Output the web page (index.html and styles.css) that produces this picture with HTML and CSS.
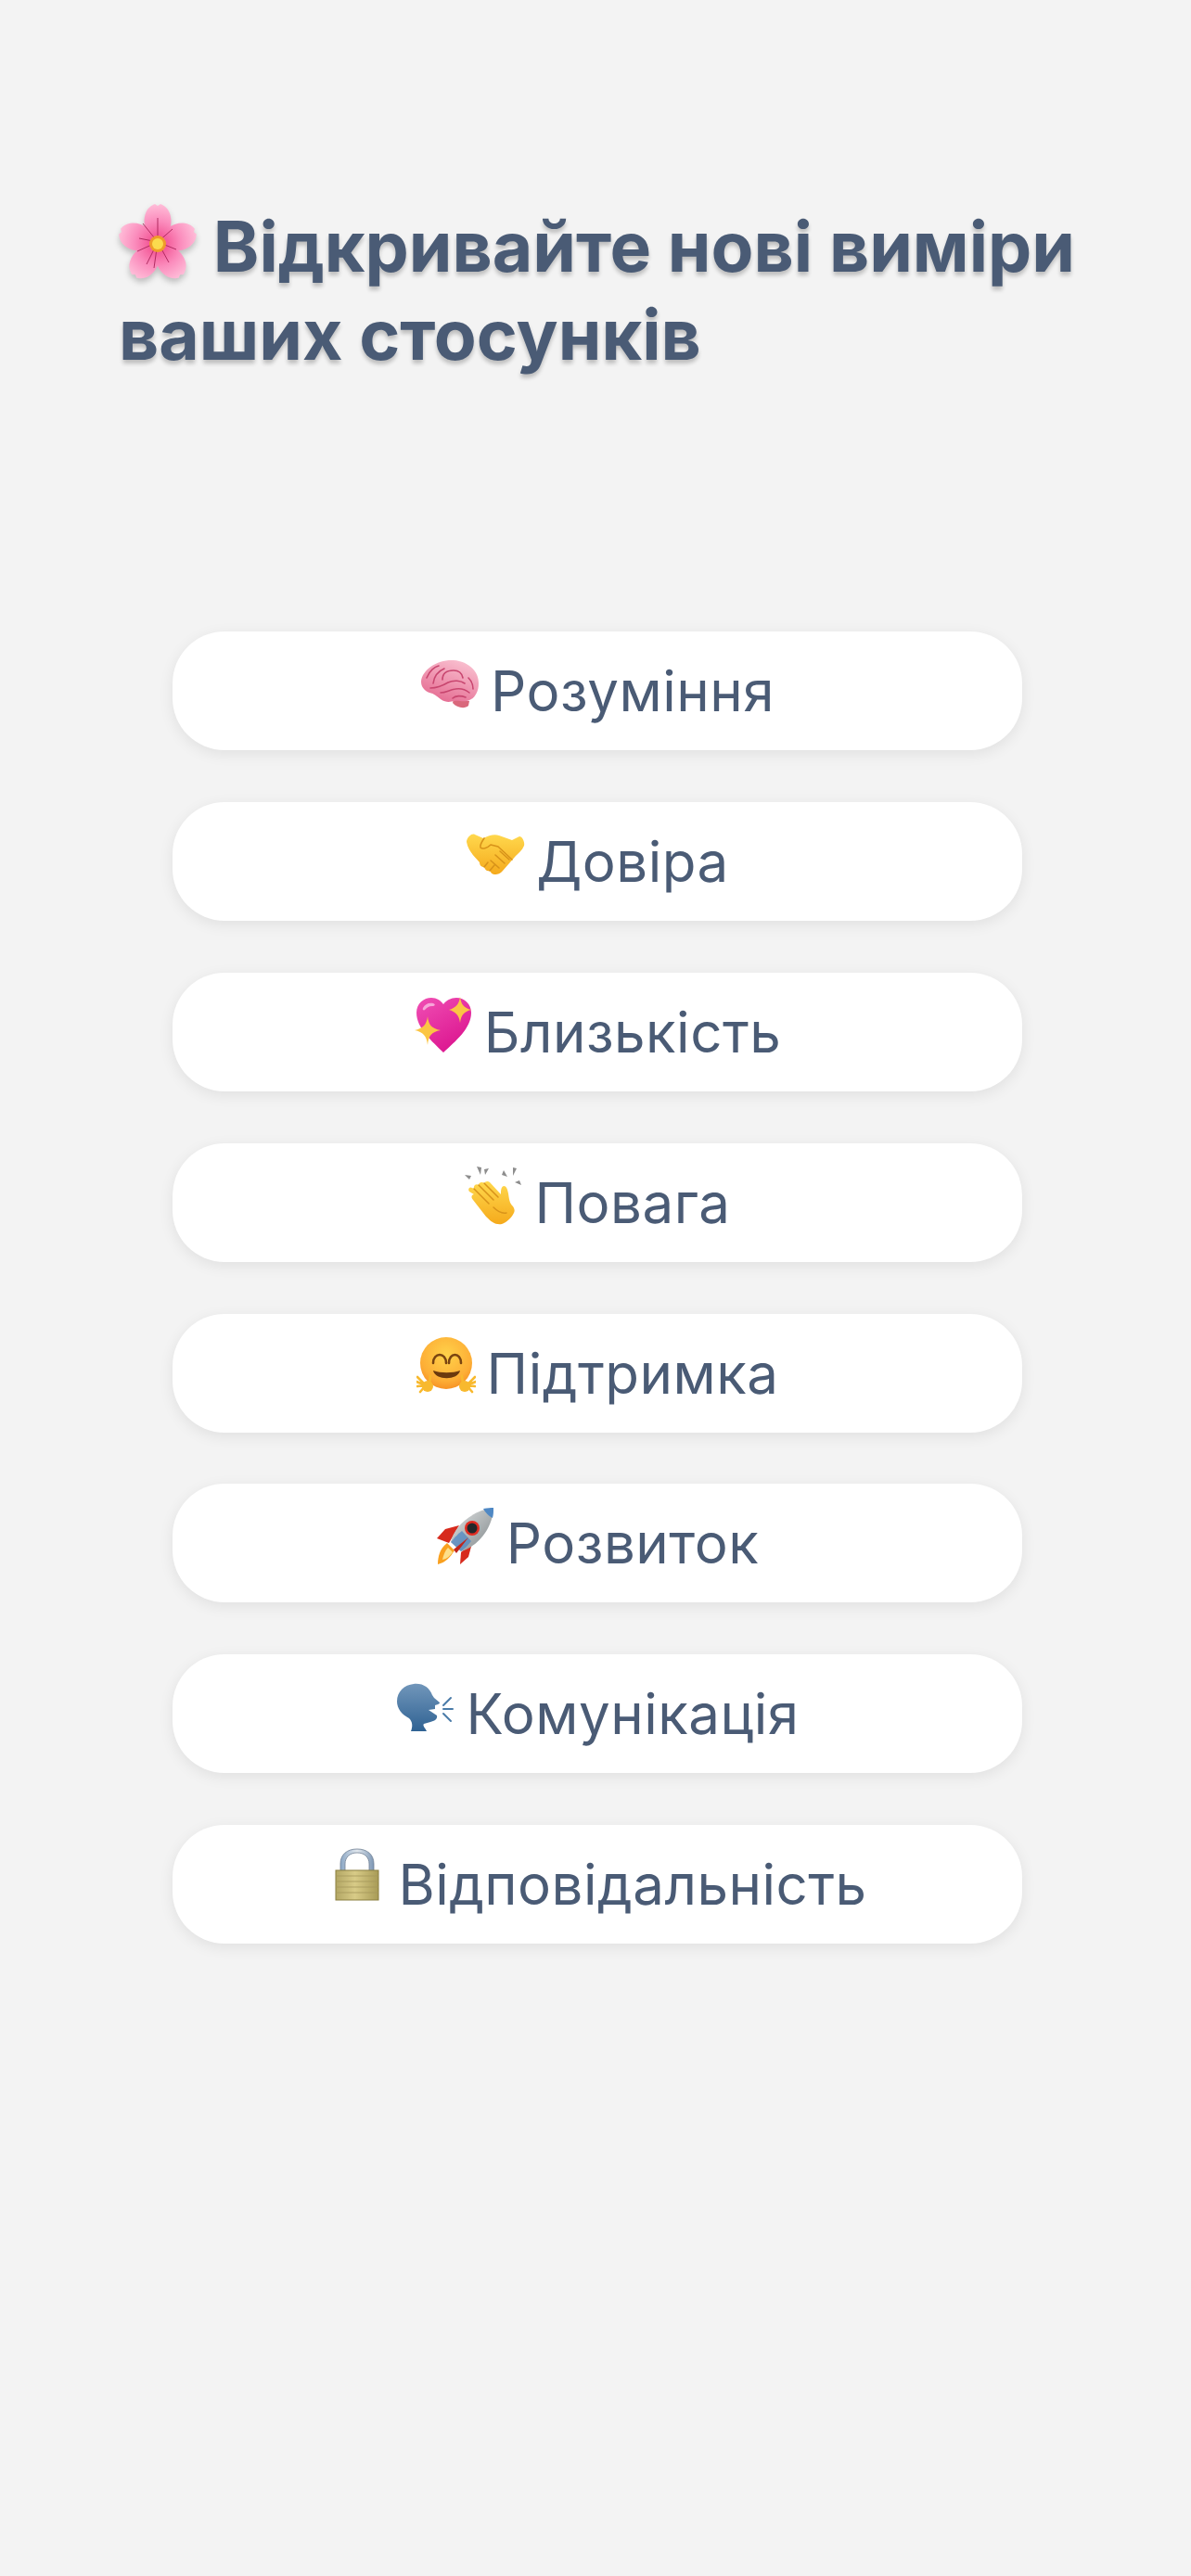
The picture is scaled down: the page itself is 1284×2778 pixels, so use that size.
FILE: index.html
```html
<!DOCTYPE html>
<html lang="uk">
<head>
    <meta charset="UTF-8">
    <meta name="viewport" content="width=device-width, initial-scale=1.0">
    <title>Відкривайте нові виміри ваших стосунків</title>
    <link rel="stylesheet" href="styles.css">
</head>
<body>
    <!-- shared gradients for the emoji drawings -->
    <svg class="defs" width="0" height="0" aria-hidden="true">
        <defs>
            <radialGradient id="petal" gradientUnits="userSpaceOnUse" cx="42" cy="42" r="42"><stop offset="0.2" stop-color="#f45f9c"/><stop offset="0.55" stop-color="#fb8dbd"/><stop offset="1" stop-color="#ffc0da"/></radialGradient>
            <linearGradient id="brainFill" x1="0.7" y1="0" x2="0.2" y2="1"><stop offset="0" stop-color="#f9bfcf"/><stop offset="1" stop-color="#e4688f"/></linearGradient>
            <linearGradient id="heartFill" x1="0" y1="0" x2="0.6" y2="1"><stop offset="0" stop-color="#f04fb4"/><stop offset="1" stop-color="#dc1690"/></linearGradient>
            <linearGradient id="yellowHand" x1="0" y1="0" x2="0" y2="1"><stop offset="0" stop-color="#ffd84d"/><stop offset="1" stop-color="#f5aa1c"/></linearGradient>
            <radialGradient id="faceFill" cx="0.5" cy="0.35" r="0.7"><stop offset="0" stop-color="#ffd24a"/><stop offset="0.7" stop-color="#fdae36"/><stop offset="1" stop-color="#f58a20"/></radialGradient>
            <linearGradient id="hullFill" x1="0" y1="0" x2="1" y2="1"><stop offset="0" stop-color="#e4e6e6"/><stop offset="1" stop-color="#7e8588"/></linearGradient>
            <linearGradient id="headFill" x1="0" y1="0" x2="0" y2="1"><stop offset="0" stop-color="#7196ba"/><stop offset="1" stop-color="#2f6293"/></linearGradient>
            <linearGradient id="lockBody" x1="0" y1="0" x2="1" y2="0"><stop offset="0" stop-color="#b3a765"/><stop offset="0.45" stop-color="#d8cb87"/><stop offset="1" stop-color="#a89b56"/></linearGradient>
            <linearGradient id="shackle" x1="0" y1="0" x2="1" y2="0"><stop offset="0" stop-color="#8aa6c4"/><stop offset="0.5" stop-color="#e2e8ee"/><stop offset="1" stop-color="#7d97b5"/></linearGradient>
        </defs>
    </svg>

    <div class="container">
        <h1 class="heading">
            <svg class="flower" viewBox="0 0 84 84" aria-hidden="true">
                <g>
                    <path d="M42 44C29 36 25 22 29 11c2-6 7-9 10-10l3 2 3-2c3 1 8 4 10 10 4 11 0 25-13 33z" fill="url(#petal)"/>
                    <path d="M42 44C29 36 25 22 29 11c2-6 7-9 10-10l3 2 3-2c3 1 8 4 10 10 4 11 0 25-13 33z" fill="url(#petal)" transform="rotate(72 42 44)"/>
                    <path d="M42 44C29 36 25 22 29 11c2-6 7-9 10-10l3 2 3-2c3 1 8 4 10 10 4 11 0 25-13 33z" fill="url(#petal)" transform="rotate(144 42 44)"/>
                    <path d="M42 44C29 36 25 22 29 11c2-6 7-9 10-10l3 2 3-2c3 1 8 4 10 10 4 11 0 25-13 33z" fill="url(#petal)" transform="rotate(216 42 44)"/>
                    <path d="M42 44C29 36 25 22 29 11c2-6 7-9 10-10l3 2 3-2c3 1 8 4 10 10 4 11 0 25-13 33z" fill="url(#petal)" transform="rotate(288 42 44)"/>
                </g>
                <path d="M42 42L26 22M42 42L42 16M42 42L22 38M42 42L58 28M42 42L20 52M42 42L30 66M42 42L54 64M42 42L62 50M42 42L38 70" stroke="#a82358" stroke-width="0.9"/>
                <circle cx="42" cy="44" r="9" fill="#ef9c2a"/>
                <circle cx="42" cy="44" r="6" fill="#fbdb4e"/>
            </svg>
            Відкривайте нові виміри ваших стосунків
        </h1>

        <div class="topics">
            <button class="topic">
                <svg class="emoji" viewBox="0 0 64 64" aria-hidden="true">
                    <g transform="translate(0 5)">
                        <path d="M35 47c4 5 13 7 17 3l1-5-17-2z" fill="#d9687c"/>
                        <path d="M1 24C2 11 19 0 36 1c14 1 27 10 27 25 0 11-6 18-13 19-5 1-9-1-13 0-5 1-9 2-15-2-4-3-7-6-12-7-5-2-9-6-9-12z" fill="url(#brainFill)"/>
                        <path d="M7 20c3-8 9-12 13-13M14 26c1-8 5-13 12-16M24 22c0-6 4-10 12-10 6 0 9 3 10 8M11 31c8 0 14-3 19-6 6-3 14-2 18 1M22 36c6 0 9-3 16-4 6-1 10 0 15 4M35 42c3-3 9-3 14-1M52 20c3 3 5 6 5 12" fill="none" stroke="#c8466f" stroke-width="1.6" stroke-linecap="round"/>
                    </g>
                </svg>
                <span>Розуміння</span>
            </button>
            <button class="topic">
                <svg class="emoji" viewBox="0 0 64 64" aria-hidden="true">
                    <path d="M1 18c0-4 5-10 9-8l9 4c6-3 12-5 17-3l14 5 8-4c3 0 6 6 5 10-2 5-6 8-9 11L40 49c-3 4-7 4-9 4-3 0-4-3-5-4-3 1-5-1-6-4-3 0-5-2-5-5C9 33 3 28 1 18z" fill="url(#yellowHand)"/>
                    <path d="M20 14c-2 3-5 7-4 10 2 2 7 1 11-3l8 2 15 14M36 46l-9-8M42 41l-10-9M47 37l-10-9M26 49l5-6M20 45l4-5" fill="none" stroke="#d8931a" stroke-width="1.6" stroke-linecap="round" stroke-linejoin="round"/>
                </svg>
                <span>Довіра</span>
            </button>
            <button class="topic">
                <svg class="emoji" viewBox="0 0 64 64" aria-hidden="true">
                    <path d="M32 61C20 49 3 35 3 18 3 8 11 2 19 2c6 0 10 3 13 7 3-4 8-7 14-7 9 0 16 7 16 16 0 17-17 31-30 43z" fill="url(#heartFill)"/>
                    <path d="M10 13c2-4 6-6 11-5 3 1 2 3-1 3-4 0-6 2-8 4-1 1-3 0-2-2z" fill="#f7a6d9"/>
                    <path d="M15 22c1 9 4 13 14 15-10 2-13 6-14 16-1-10-5-14-14-16 9-2 13-6 14-15z" fill="#fbc544"/>
                    <path d="M50 1c1 8 4 12 12 14-8 2-11 6-12 14-1-8-5-12-12-14 7-2 11-6 12-14z" fill="#fbc544"/>
                </svg>
                <span>Близькість</span>
            </button>
            <button class="topic">
                <svg class="emoji" viewBox="0 0 64 64" aria-hidden="true">
                    <path d="M6 27c-2-2 0-6 3-4l2 1c-1-3 2-6 5-4 0-3 4-4 6-2 1-2 4-3 6-1l12 13c0-4 0-8 3-9 3 0 4 3 5 8 1 6 1 10 5 14 2 3 2 5 1 7-3 6-8 10-13 12-7 1-11-2-17-8L10 36c-3-3-1-6 1-6z" fill="url(#yellowHand)"/>
                    <path d="M11 24l16 16M16 20l16 16M22 18l15 15M32 44c4 4 9 7 14 6" fill="none" stroke="#d8931a" stroke-width="1.5" stroke-linecap="round"/>
                    <path d="M1 9l7 1-2 4zM14 0l5 1-1 8zM27 2l-4 7-1-6zM43 4l4 7-6-2zM53 1l4 1-4 8zM60 15l2 5-7-3z" fill="#8d8d8d"/>
                </svg>
                <span>Повага</span>
            </button>
            <button class="topic">
                <svg class="emoji" viewBox="0 0 64 64" aria-hidden="true">
                    <circle cx="32" cy="28" r="28" fill="url(#faceFill)"/>
                    <path d="M18 28c0-12 14-12 14 0M35 28c0-12 13-12 13 0" fill="none" stroke="#7a4410" stroke-width="2.6" stroke-linecap="round"/>
                    <path d="M18 36c8 3 21 3 29 0-2 11-27 11-29 0z" fill="#6b3a0e"/>
                    <g fill="none" stroke="#f8b92e" stroke-width="2.6" stroke-linecap="round">
                        <path d="M10 52L1 43M10 52L0 48M10 52L1 53M10 52L4 59M14 50L15 42"/>
                        <path d="M54 52L63 43M54 52L64 48M54 52L63 53M54 52L60 59M50 50L49 42"/>
                    </g>
                    <circle cx="12" cy="53" r="6" fill="#f8b92e"/>
                    <circle cx="52" cy="53" r="6" fill="#f8b92e"/>
                </svg>
                <span>Підтримка</span>
            </button>
            <button class="topic">
                <svg class="emoji" viewBox="0 0 64 64" aria-hidden="true">
                    <path d="M2 62c0-8 2-17 10-23l8 8C15 55 10 60 2 62z" fill="#f9a01f"/>
                    <path d="M7 57c1-5 3-10 6-13l5 5c-3 4-6 7-11 8z" fill="#fde08a"/>
                    <path d="M1 34L10 24 25 20 14 39z" fill="#d72a1d"/>
                    <path d="M26 62l1-13 12-10-4 15z" fill="#d72a1d"/>
                    <path d="M16 38C19 22 38 4 62 1c-1 25-20 43-35 47z" fill="url(#hullFill)"/>
                    <path d="M51 2c5-1 8-1 11-1 0 4 0 7-1 11-4-2-8-6-10-10z" fill="#4f88c4"/>
                    <path d="M16 38c5-6 8-9 12-12l10 11c-3 4-7 8-11 11z" fill="#4f88c4" opacity="0.75"/>
                    <circle cx="39" cy="23" r="8" fill="#e12c22"/>
                    <circle cx="39" cy="23" r="5.5" fill="#23272b"/>
                    <path d="M19 46L35 33 22 50z" fill="#c0251b"/>
                </svg>
                <span>Розвиток</span>
            </button>
            <button class="topic">
                <svg class="emoji" viewBox="0 0 64 64" aria-hidden="true">
                    <g transform="translate(0 5)">
                        <path d="M20 2c10-1 17 4 20 12l2 3 6 5c0 2-3 2-5 3l0 4-7 1 9 6c1 4-3 6-7 7l-7 2c-2 2 2 5 3 8H17c2-5 2-10-2-14C7 35 2 28 2 21 2 10 10 3 20 2z" fill="url(#headFill)"/>
                        <path d="M52 25l8-8M52 29h10M52 34l8 8" fill="none" stroke="#4a7ba8" stroke-width="2" stroke-linecap="round"/>
                    </g>
                </svg>
                <span>Комунікація</span>
            </button>
            <button class="topic">
                <svg class="emoji" viewBox="0 0 64 64" aria-hidden="true">
                    <path d="M14 26V17C14 7 21 1 32 1s18 6 18 16v9h-5v-9c0-7-5-12-13-12s-13 5-13 12v9z" fill="url(#shackle)" stroke="#6f7f93" stroke-width="0.8"/>
                    <rect x="9" y="24" width="46" height="32" fill="url(#lockBody)" stroke="#8a7e3e" stroke-width="1"/>
                    <path d="M9 30h46M9 36h46M9 42h46M9 48h46" stroke="#a5985a" stroke-width="0.8"/>
                </svg>
                <span>Відповідальність</span>
            </button>
        </div>
    </div>
</body>
</html>
```
FILE: styles.css
```css
* {
    margin: 0;
    padding: 0;
    box-sizing: border-box;
}

body {
    font-family: 'Inter', 'Liberation Sans', sans-serif;
    background: #f3f3f3;
    min-height: 100vh;
    color: #4a5b75;
}

.defs {
    position: absolute;
}

.container {
    padding-top: 218px;
}

.heading {
    padding: 0 100px 0 128px;
    font-size: 75px;
    font-weight: 700;
    line-height: 95px;
    text-shadow: 0 4px 4px rgba(0, 0, 0, 0.22);
}

.flower {
    width: 84px;
    height: 84px;
    vertical-align: -10px;
    filter: drop-shadow(0 4px 3px rgba(0, 0, 0, 0.22));
}

.topics {
    display: flex;
    flex-direction: column;
    align-items: center;
    gap: 55.9px;
    margin-top: 273px;
    padding-left: 4px;
}

.topic {
    display: flex;
    align-items: center;
    justify-content: center;
    gap: 12px;
    width: 916px;
    height: 128px;
    border: none;
    border-radius: 56px;
    background: #fff;
    box-shadow: 0 4px 16px rgba(0, 0, 0, 0.08);
    font-family: inherit;
    font-size: 60px;
    letter-spacing: 0.5px;
    color: #4a5b75;
}

.emoji {
    width: 64px;
    height: 64px;
    margin-bottom: 14px;
}
```
